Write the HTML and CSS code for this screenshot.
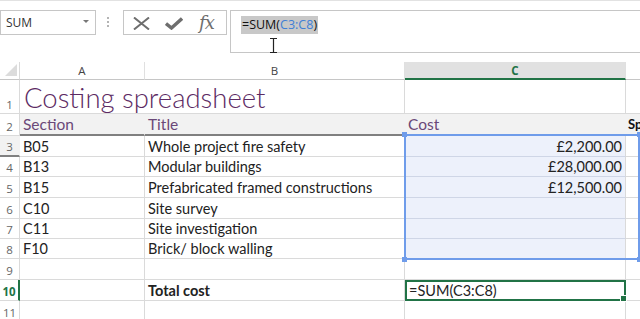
FILE: index.html
```html
<!DOCTYPE html>
<html>
<head>
<meta charset="utf-8">
<link rel="stylesheet" href="styles.css">
</head>
<body>
<div class="topline"></div>
<div class="fbar">
  <div class="namebox"><span>SUM</span><span class="caret"></span></div>
  <div class="dots"><i></i><i></i><i></i></div>
  <div class="btns">
    <svg class="ico-x" width="17" height="13" viewBox="0 0 17 13"><path d="M1 0.5 L16 12.5 M16 0.5 L1 12.5" stroke="#6e6e6e" stroke-width="2" fill="none"/></svg>
    <svg class="ico-ok" width="18" height="13" viewBox="0 0 18 13"><path d="M1 6.5 L6.5 11 L17 1.5" stroke="#6e6e6e" stroke-width="3.4" fill="none"/></svg>
    <span class="fx">fx</span>
  </div>
  <div class="formula">
    <span class="hl">=SUM(<span class="ref">C3:C8</span>)</span>
    <svg class="ibeam" width="9" height="15" viewBox="0 0 9 15"><path d="M1 0.5 H8 M4.5 0.5 V14.5 M1 14.5 H8" stroke="#222" stroke-width="1.2" fill="none"/></svg>
  </div>
</div>
<div class="sheet">
  <div class="corner"><span class="tri"></span></div>
  <div class="ch">A</div>
  <div class="ch">B</div>
  <div class="ch active">C</div>
  <div class="ch last"></div>

  <div class="rh">1</div>
  <div class="cell title span2">Costing spreadsheet</div>
  <div class="cell"></div>
  <div class="cell last"></div>

  <div class="rh">2</div>
  <div class="cell hd">Section</div>
  <div class="cell hd">Title</div>
  <div class="cell hd">Cost</div>
  <div class="cell last bold">Spend</div>

  <div class="rh">3</div>
  <div class="cell">B05</div>
  <div class="cell">Whole project fire safety</div>
  <div class="cell sel num">£2,200.00</div>
  <div class="cell last"></div>

  <div class="rh">4</div>
  <div class="cell">B13</div>
  <div class="cell">Modular buildings</div>
  <div class="cell sel num">£28,000.00</div>
  <div class="cell last"></div>

  <div class="rh">5</div>
  <div class="cell">B15</div>
  <div class="cell">Prefabricated framed constructions</div>
  <div class="cell sel num">£12,500.00</div>
  <div class="cell last"></div>

  <div class="rh">6</div>
  <div class="cell">C10</div>
  <div class="cell">Site survey</div>
  <div class="cell sel"></div>
  <div class="cell last"></div>

  <div class="rh">7</div>
  <div class="cell">C11</div>
  <div class="cell">Site investigation</div>
  <div class="cell sel"></div>
  <div class="cell last"></div>

  <div class="rh">8</div>
  <div class="cell">F10</div>
  <div class="cell">Brick/ block walling</div>
  <div class="cell sel"></div>
  <div class="cell last"></div>

  <div class="rh">9</div>
  <div class="cell"></div>
  <div class="cell"></div>
  <div class="cell"></div>
  <div class="cell last"></div>

  <div class="rh act">10</div>
  <div class="cell"></div>
  <div class="cell bold">Total cost</div>
  <div class="cell activecell">=SUM(C3:C8)<span class="fill"></span></div>
  <div class="cell last"></div>

  <div class="rh">11</div>
  <div class="cell"></div>
  <div class="cell"></div>
  <div class="cell"></div>
  <div class="cell last"></div>

  <div class="selbox"><i class="h tl"></i><i class="h tr"></i><i class="h bl"></i><i class="h br"></i></div>
</div>
</body>
</html>
```

FILE: styles.css
```css
html, body {
  margin: 0;
  padding: 0;
  background: #fff;
  overflow: hidden;
}
body {
  width: 640px;
  height: 319px;
  font-family: "Lato", "Liberation Sans", sans-serif;
}
.topline {
  height: 1px;
  background: #e2e2e2;
}
.fbar {
  margin-top: 9px;
  display: flex;
  align-items: flex-start;
  height: 43px;
}
.namebox {
  box-sizing: border-box;
  width: 96px;
  height: 25px;
  border: 1px solid #c6c6c6;
  display: flex;
  align-items: center;
  justify-content: space-between;
  padding: 0 6px 0 5px;
  font-family: "Open Sans", sans-serif;
  font-size: 12px;
  color: #333;
}
.caret {
  width: 0;
  height: 0;
  border-left: 3px solid transparent;
  border-right: 3px solid transparent;
  border-top: 3px solid #777;
  margin-top: -2px;
}
.dots {
  margin-left: 11px;
  margin-top: 7px;
  display: flex;
  flex-direction: column;
  gap: 2px;
}
.dots i {
  display: block;
  width: 2px;
  height: 2px;
  background: #b4b4b4;
}
.btns {
  box-sizing: border-box;
  margin-left: 14px;
  width: 104px;
  height: 25px;
  border: 1px solid #c6c6c6;
  display: flex;
  align-items: center;
  padding-left: 9px;
}
.ico-x { margin-top: 1px; }
.ico-ok { margin-left: 15px; margin-top: 1px; }
.fx {
  margin-left: 16px;
  font-family: "DejaVu Serif", "Liberation Serif", serif;
  font-style: italic;
  font-size: 18px;
  color: #6e6e6e;
  letter-spacing: -1px;
  line-height: 1;
}
.formula {
  position: relative;
  box-sizing: border-box;
  margin-left: 3px;
  flex: 1;
  height: 43px;
  border: 1px solid #c6c6c6;
  border-right: none;
  padding: 2px 0 0 10px;
}
.hl {
  display: inline-block;
  background: #c8c8c8;
  font-family: "Open Sans", sans-serif;
  font-size: 12.5px;
  line-height: 18px;
  color: #111;
  padding: 0 1px;
}
.ref { color: #3f7fd6; }
.ibeam {
  position: absolute;
  left: 38px;
  top: 27px;
}

/* sheet */
.sheet {
  position: relative;
  margin-top: 9px;
  display: grid;
  grid-template-columns: 20px 125px 260px 221px 1fr;
  grid-template-rows: 18px 34px 22px 21px 20px 21px 21px 20px 20px 21px 21px 21px;
  font-size: 14.5px;
  color: #222;
}
.sheet > div {
  box-sizing: border-box;
  min-width: 0;
  white-space: nowrap;
  overflow: hidden;
}
.corner {
  border-right: 1px solid #dadada;
  border-bottom: 1px solid #c6c6c6;
  position: relative;
}
.tri {
  position: absolute;
  right: 2px;
  bottom: 3px;
  width: 12px;
  height: 12px;
  background: #dcdcdc;
  clip-path: polygon(100% 0, 100% 100%, 0 100%);
}
.ch {
  border-right: 1px solid #e0e0e0;
  border-bottom: 1px solid #c6c6c6;
  text-align: center;
  font-family: "Open Sans", sans-serif;
  font-size: 11.5px;
  line-height: 17px;
  color: #444;
}
.ch.active {
  background: #e1e1e1;
  border-bottom: 2px solid #217346;
  color: #217346;
  font-weight: 700;
}
.ch.last { border-right: none; }
.rh {
  border-right: 1px solid #dadada;
  border-bottom: 1px solid #dadada;
  display: flex;
  align-items: flex-end;
  justify-content: center;
  font-family: "Open Sans", sans-serif;
  font-size: 11.5px;
  color: #666;
  padding-bottom: 1px;
}
.rh.act {
  color: #217346;
  font-weight: 700;
  border-right: 2px solid #217346;
}
.cell {
  border-right: 1px solid #dadada;
  border-bottom: 1px solid #dadada;
  display: flex;
  align-items: flex-end;
  padding: 0 3px 1px 3px;
}
.cell.last { border-right: none; }
.span2 { grid-column: span 2; }
.sheet > .title {
  font-size: 27.5px;
  font-weight: 300;
  line-height: 26px;
  color: #5c2a63;
  padding-bottom: 2px;
  padding-left: 4px;
  overflow: visible;
}
.sheet > :nth-child(n+11):nth-child(-n+15) {
  background: #f2f2f2;
  border-right-color: #f2f2f2;
  border-bottom: 2px solid #808080;
}
.sheet > :nth-child(15) {
  background: #fff;
  border-bottom: 1px solid #dadada;
}
.hd {
  color: #6a4878;
  font-size: 15.5px;
}
.bold {
  font-weight: 700;
}
.cell.last.bold {
  font-size: 13px;
  color: #111;
  padding-left: 2px;
  padding-bottom: 2px;
}
.sel {
  background: #edf1fb;
  border-bottom-color: #cfd6e6;
}
.num { justify-content: flex-end; }
.sheet > .activecell {
  position: relative;
  outline: 2px solid #217346;
  outline-offset: -2px;
  padding-left: 4px;
  overflow: visible;
}
.fill {
  position: absolute;
  right: -2px;
  bottom: -2px;
  width: 5px;
  height: 5px;
  background: #217346;
  border: 1px solid #fff;
}
.sheet > .selbox {
  position: absolute;
  grid-column: 4;
  grid-row: 4 / 10;
  top: -2px;
  left: -1px;
  right: 0;
  bottom: -1px;
  border: 2px solid #6f9cea;
  overflow: visible;
  pointer-events: none;
}
.h {
  position: absolute;
  width: 5px;
  height: 5px;
  background: #6f9cea;
}
.tl { left: -4px; top: -4px; }
.tr { right: -4px; top: -4px; }
.bl { left: -4px; bottom: -4px; }
.br { right: -4px; bottom: -4px; }
```
